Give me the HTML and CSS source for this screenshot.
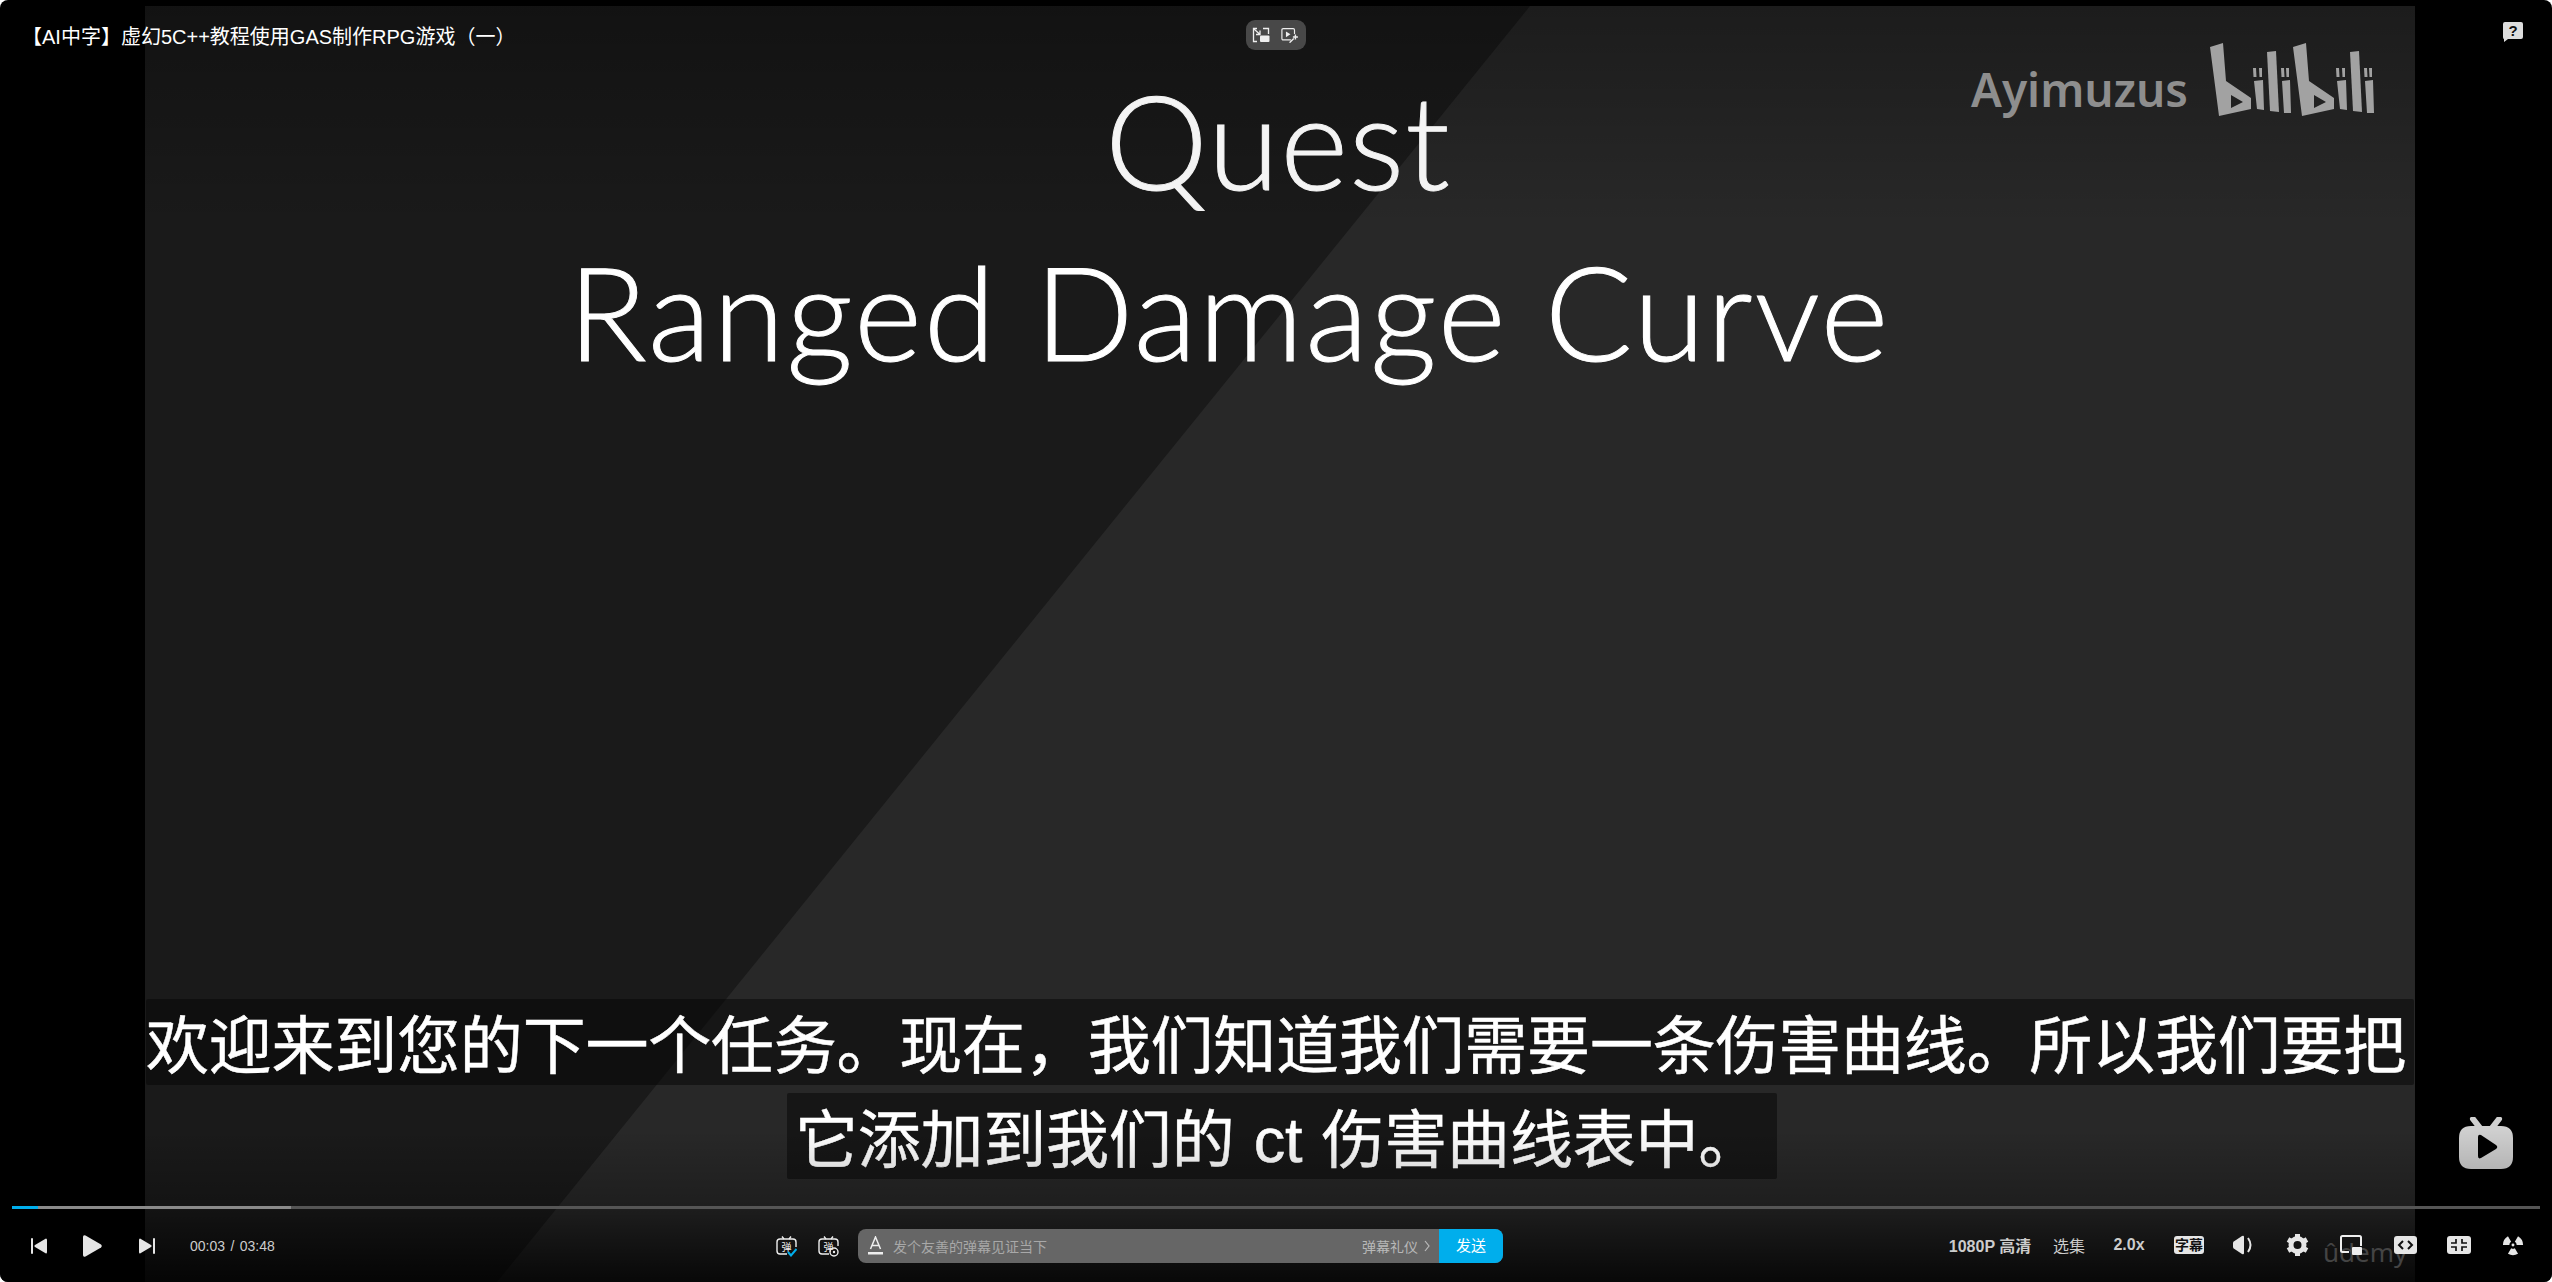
FILE: index.html
```html
<!DOCTYPE html>
<html>
  <head>
    <meta charset="UTF-8">
    <title>【AI中字】虚幻5C++教程使用GAS制作RPG游戏（一）</title>
    <link rel="stylesheet" href="styles.css">
  </head>
  <body>
    <div class="player">
      <div class="video">
        <div class="slide">
          <div class="slide-quest">Quest</div>
          <div class="slide-name">Ranged Damage Curve</div>
        </div>
      </div>

      <div class="topbar">
        <div class="video-title">【AI中字】虚幻5C++教程使用GAS制作RPG游戏（一）</div>
        <div class="mini-btns">
          <svg class="mini-icon" viewBox="0 0 18 16" fill="none" stroke="#eee" stroke-width="1.3">
            <path d="M5 1.5 H1.5 V14.5 H5 M11 1.5 H16.5 V7"/>
            <path d="M2 2 L8 7.5 M8 3.5 V7.5 H4"/>
            <rect x="8" y="8.5" width="9.5" height="6.5" rx="1" fill="#eee" stroke="none"/>
          </svg>
          <svg class="mini-icon" viewBox="0 0 20 16" fill="none" stroke="#eee" stroke-width="1.3">
            <path d="M11 13.5 H2.5 Q1 13.5 1 12 V2.5 Q1 1 2.5 1 H13.5 Q15 1 15 2.5 V7"/>
            <path d="M5.5 4 L10.5 7.2 L5.5 10.5 Z" fill="#eee" stroke="none"/>
            <path d="M16 7.5 V13 M13.2 10.2 H18.8 M14.2 12 L9.5 16.5" stroke-width="1.6"/>
          </svg>
        </div>
        <svg class="help-icon" viewBox="0 0 20 20">
          <path d="M2 0 H18 Q20 0 20 2 V15 Q20 17 18 17 H5 L1 20 V17 Q0 17 0 15 V2 Q0 0 2 0 Z" fill="#ddd"/>
          <text x="10" y="14" text-anchor="middle" class="help-mark">?</text>
        </svg>
      </div>

      <div class="watermark">
        <span class="watermark-name">Ayimuzus</span>
        <svg class="bili-logo" viewBox="0 0 165 73" fill="#a2a2a2">
          <g>
            <path fill-rule="evenodd" d="M0 4 L13 0 L16 38 L41 55 L41 66 L9 73 Z M21 52 L21 65 L33 59 Z"/>
            <path d="M43 25 H46 L46.500 34 H43.500 Z M49 25 H52 L52 34 H49.500 Z M44 38 L53 37 L54 67 L47 66 Z"/>
            <path d="M57 9 L66 8 L69 69 L60 68 Z"/>
            <path d="M71 25 H74 L74.500 34 H71.500 Z M76 25 H79 L79 34 H76.500 Z M72 38 L80 37 L81 70 L74 70 Z"/>
          </g>
          <g transform="translate(83 0)">
            <path fill-rule="evenodd" d="M0 4 L13 0 L16 38 L41 55 L41 66 L9 73 Z M21 52 L21 65 L33 59 Z"/>
            <path d="M43 25 H46 L46.500 34 H43.500 Z M49 25 H52 L52 34 H49.500 Z M44 38 L53 37 L54 67 L47 66 Z"/>
            <path d="M57 9 L66 8 L69 69 L60 68 Z"/>
            <path d="M71 25 H74 L74.500 34 H71.500 Z M76 25 H79 L79 34 H76.500 Z M72 38 L80 37 L81 70 L74 70 Z"/>
          </g>
        </svg>
      </div>

      <div class="subtitles">
        <span class="sub-line sub-line-long">欢迎来到您的下一个任务。现在，我们知道我们需要一条伤害曲线。所以我们要把</span>
        <span class="sub-line sub-line-short">它添加到我们的 ct 伤害曲线表中。</span>
      </div>

      <svg class="tv-icon" viewBox="0 0 54 52" fill="#cfcfcf">
        <path d="M14 2 L21 11 M40 2 L33 11" stroke="#cfcfcf" stroke-width="6" stroke-linecap="round"/>
        <path fill-rule="evenodd" d="M12 9 H42 Q54 9 54 21 V40 Q54 52 42 52 H12 Q0 52 0 40 V21 Q0 9 12 9 Z M19 20 Q19 17 22 18 L37 28 Q39.500 30 37 32 L22 41 Q19 42.500 19 39 Z"/>
      </svg>

      <div class="controls">
        <div class="progress">
          <div class="progress-played"></div>
          <div class="progress-buffered"></div>
        </div>
        <div class="control-row">
          <div class="control-left">
            <svg class="ctl-prev" viewBox="0 0 16 16" fill="#e6e6e6">
              <rect x="0" y="0" width="2" height="16" rx="1"/>
              <path d="M15 .5 Q16 .5 16 2 V14 Q16 15.500 15 15.500 L4 9 Q2.500 8 4 7 Z"/>
            </svg>
            <svg class="ctl-play" viewBox="0 0 19 22" fill="#e6e6e6">
              <path d="M0 2 Q0 -.5 2.500 .5 L18 9.500 Q19.500 11 18 12.500 L2.500 21.500 Q0 22.500 0 20 Z"/>
            </svg>
            <svg class="ctl-next" viewBox="0 0 16 16" fill="#e6e6e6">
              <rect x="14" y="0" width="2" height="16" rx="1"/>
              <path d="M1 .5 Q0 .5 0 2 V14 Q0 15.500 1 15.500 L12 9 Q13.500 8 12 7 Z"/>
            </svg>
            <span class="time">00:03 / 03:48</span>
          </div>

          <div class="control-mid">
            <svg class="dm-icon" viewBox="0 0 21 21" fill="none" stroke="#eee" stroke-width="1.400">
              <path d="M6 .5 L8 3 M15 .5 L13 3"/>
              <path d="M11 18 H4 Q1 18 1 15 V6 Q1 3 4 3 H17 Q20 3 20 6 V11"/>
              <text x="10.500" y="14.500" text-anchor="middle" class="dm-char">弹</text>
              <path d="M12 16 L15 19.500 L20.500 13" stroke="#00aeec" stroke-width="2"/>
            </svg>
            <svg class="dm-icon" viewBox="0 0 21 21" fill="none" stroke="#eee" stroke-width="1.400">
              <path d="M6 .5 L8 3 M15 .5 L13 3"/>
              <path d="M11 18 H4 Q1 18 1 15 V6 Q1 3 4 3 H17 Q20 3 20 6 V10"/>
              <text x="10.500" y="14.500" text-anchor="middle" class="dm-char">弹</text>
              <circle cx="16" cy="16" r="4"/>
              <circle cx="16" cy="16" r="1.200" fill="#eee" stroke="none"/>
            </svg>
            <div class="dm-input">
              <svg class="dm-a" viewBox="0 0 15 20" fill="none" stroke="#eee" stroke-width="1.500">
                <path d="M2.500 13 L7.500 1 L12.500 13 M4 9.500 H11"/>
                <rect x="0" y="16" width="15" height="2.500" fill="#eee" stroke="none"/>
              </svg>
              <span class="dm-placeholder">发个友善的弹幕见证当下</span>
              <span class="dm-rules">弹幕礼仪</span>
              <svg class="dm-chevron" viewBox="0 0 6 12" fill="none" stroke="#bbb" stroke-width="1.200"><path d="M1 1 L5 6 L1 11"/></svg>
              <span class="dm-send">发送</span>
            </div>
          </div>

          <div class="control-right">
            <span class="ctl-text ctl-quality">1080P 高清</span>
            <span class="ctl-text ctl-normal">选集</span>
            <span class="ctl-text ctl-speed">2.0x</span>
            <span class="ctl-slot"><span class="cc-badge">字幕</span></span>
            <span class="ctl-slot">
              <svg width="21" height="20" viewBox="0 0 21 20" fill="none">
                <path d="M0 8 Q0 6.500 1.500 6 L9 1 Q11 0 11 2 V18 Q11 20 9 19 L1.500 14 Q0 13.500 0 12 Z" fill="#e6e6e6"/>
                <path d="M15 3 Q20 10 15 17" stroke="#e6e6e6" stroke-width="2"/>
              </svg>
            </span>
            <span class="ctl-slot">
              <svg width="25" height="22" viewBox="0 0 25 22" fill="none" stroke="#e6e6e6">
                <circle cx="12.500" cy="11" r="6.500" stroke-width="5"/>
                <path d="M12.500 0 V4 M12.500 18 V22 M3 5.500 L6.500 7.500 M18.500 14.500 L22 16.500 M3 16.500 L6.500 14.500 M18.500 7.500 L22 5.500" stroke-width="5"/>
              </svg>
            </span>
            <span class="ctl-slot udemy-slot">
              <svg width="22" height="20" viewBox="0 0 22 20" fill="none">
                <path d="M9 17 H2.500 Q1 17 1 15.500 V2.500 Q1 1 2.500 1 H19.500 Q21 1 21 2.500 V11" stroke="#eee" stroke-width="2"/>
                <rect x="12" y="12" width="10" height="8" rx="1" fill="#eee"/>
              </svg>
              <span class="udemy-mark">ûdemy</span>
            </span>
            <span class="ctl-slot">
              <svg width="23" height="18" viewBox="0 0 23 18">
                <rect width="23" height="18" rx="3" fill="#e6e6e6"/>
                <path d="M9 5 L5 9 L9 13 M14 5 L18 9 L14 13" fill="none" stroke="#111" stroke-width="2"/>
              </svg>
            </span>
            <span class="ctl-slot">
              <svg width="24" height="18" viewBox="0 0 24 18">
                <rect width="24" height="18" rx="3" fill="#e6e6e6"/>
                <path d="M9 3 V7 H4 M15 3 V7 H20 M9 15 V11 H4 M15 15 V11 H20" fill="none" stroke="#111" stroke-width="1.700"/>
              </svg>
            </span>
            <span class="ctl-slot">
              <svg width="24" height="22" viewBox="0 0 24 24" fill="#e6e6e6">
                <path d="M14 15.460 L17.500 21.530 A11 11 0 0 1 6.500 21.530 L10 15.460 A4 4 0 0 0 14 15.460 Z"/>
                <path d="M8 12 L1 12 A11 11 0 0 1 6.500 2.470 L10 8.540 A4 4 0 0 0 8 12 Z"/>
                <path d="M14 8.540 L17.500 2.470 A11 11 0 0 1 23 12 L16 12 A4 4 0 0 0 14 8.540 Z"/>
                <circle cx="12" cy="12" r="1.600"/>
              </svg>
            </span>
          </div>
        </div>
      </div>
    </div>
  </body>
</html>
```

FILE: styles.css
```css
html, body {
  margin: 0;
  height: 100%;
  background: #fff;
}
body {
  font-family: "Liberation Sans", "Noto Sans CJK SC", sans-serif;
  overflow: hidden;
}
.player {
  position: relative;
  height: 1282px;
  background: #000;
  border-radius: 8px;
  overflow: hidden;
  color: #fff;
}

/* the video frame with its two-tone slide */
.video {
  position: relative;
  box-sizing: border-box;
  height: 1276px;
  margin: 0 137px 0 145px;
  top: 6px;
  background: #282828;
}
.video::before {
  content: "";
  position: absolute;
  inset: 0;
  background: #1a1a1a;
  clip-path: polygon(0 0, 1385px 0, 352px 100%, 0 100%);
}
.video::after {
  content: "";
  position: absolute;
  inset: 0;
  background: linear-gradient(to bottom, rgba(0,0,0,.3), rgba(0,0,0,0) 220px);
}
.slide {
  position: relative;
  z-index: 1;
  font-family: Lato, sans-serif;
  font-weight: 300;
  color: #f4f4f4;
  -webkit-text-stroke: 1px currentColor;
}
.slide-quest {
  font-size: 130px;
  line-height: 160px;
  padding: 54px 0 0 960px;
  letter-spacing: 1px;
}
.slide-name {
  font-size: 130px;
  line-height: 160px;
  padding: 11px 0 0 423px;
  letter-spacing: 2px;
  color: #fff;
  white-space: nowrap;
}

/* top overlays */
.topbar {
  position: absolute;
  top: 20px;
  left: 0;
  right: 0;
}
.video-title {
  position: absolute;
  left: 22px;
  top: 3px;
  font-size: 20px;
  line-height: 28px;
  white-space: nowrap;
}
.mini-btns {
  position: absolute;
  left: 1246px;
  top: 0;
  width: 60px;
  height: 30px;
  box-sizing: border-box;
  padding: 0 6px;
  display: flex;
  align-items: center;
  gap: 11px;
  background: #484848;
  border-radius: 9px;
}
.mini-icon {
  width: 18px;
  height: 16px;
}
.help-icon {
  position: absolute;
  left: 2503px;
  top: 2px;
  width: 20px;
  height: 20px;
}
.help-mark {
  font-size: 15px;
  font-weight: 700;
  fill: #111;
}
.watermark {
  position: absolute;
  left: 1971px;
  top: 43px;
  display: flex;
  align-items: flex-start;
  gap: 22px;
}
.watermark-name {
  font-family: "Noto Sans", sans-serif;
  font-size: 46px;
  font-weight: 600;
  line-height: 64px;
  margin-top: 14px;
  color: #8e8e8e;
}
.bili-logo {
  width: 165px;
  height: 73px;
}

/* subtitles */
.subtitles {
  position: absolute;
  left: 145px;
  right: 137px;
  bottom: 103px;
  display: flex;
  flex-direction: column;
  align-items: center;
  gap: 8px;
}
.sub-line {
  font-size: 63px;
  line-height: 94px;
  height: 86px;
  letter-spacing: -.22px;
  color: #fff;
  white-space: pre;
  background: rgba(8,8,8,.55);
  border-radius: 2px;
  -webkit-text-stroke: .5px #fff;
}
.sub-line-long {
  padding-right: 8px;
}
.sub-line-short {
  padding: 0 16px 0 8px;
  margin-left: 4px;
  word-spacing: 2px;
}
.tv-icon {
  position: absolute;
  left: 2459px;
  top: 1117px;
  width: 54px;
  height: 52px;
}

/* bottom controls */
.controls {
  position: absolute;
  left: 0;
  right: 0;
  bottom: 0;
  height: 152px;
  box-sizing: border-box;
  padding-top: 76px;
  background: linear-gradient(to bottom, rgba(0,0,0,0), rgba(0,0,0,.25) 50%, rgba(0,0,0,.8));
}
.progress {
  display: flex;
  height: 3px;
  margin: 0 12px;
  background: #555;
}
.progress-played {
  width: 26px;
  background: #00aeec;
}
.progress-buffered {
  width: 253px;
  background: #8a8a8a;
}
.control-row {
  display: grid;
  grid-template-columns: 745px 727px 1fr;
  align-items: center;
  height: 34px;
  margin-top: 20px;
  padding: 0 12px 0 31px;
}
.control-left {
  display: flex;
  align-items: center;
}
.ctl-prev, .ctl-next {
  width: 16px;
  height: 16px;
}
.ctl-play {
  width: 19px;
  height: 22px;
  margin: 0 37px 0 36px;
}
.time {
  margin-left: 35px;
  font-size: 14px;
  word-spacing: 1.5px;
  color: #ccc;
}
.control-mid {
  display: flex;
  align-items: center;
}
.dm-icon {
  width: 21px;
  height: 21px;
  margin-right: 21px;
}
.dm-icon + .dm-icon {
  margin-right: 19px;
}
.dm-char {
  font-size: 10px;
  fill: #eee;
  stroke: none;
}
.dm-input {
  flex: 1;
  display: flex;
  align-items: center;
  height: 34px;
  padding-left: 10px;
  background: #666;
  border-radius: 8px;
  overflow: hidden;
  font-size: 14px;
}
.dm-a {
  width: 15px;
  height: 20px;
  margin-right: 10px;
}
.dm-placeholder {
  color: #a8a8a8;
  flex: 1;
}
.dm-rules {
  color: #b8b8b8;
}
.dm-chevron {
  width: 6px;
  height: 12px;
  margin: 0 9px 0 6px;
}
.dm-send {
  width: 64px;
  line-height: 34px;
  text-align: center;
  background: #00aeec;
  color: #fff;
  font-size: 15px;
}
.control-right {
  display: flex;
  align-items: center;
  justify-content: flex-end;
  margin-top: -3px;
}
.ctl-text {
  font-size: 16px;
  color: #ccc;
  text-align: center;
  white-space: nowrap;
}
.ctl-quality {
  width: 104px;
  font-weight: 700;
}
.ctl-normal {
  width: 54px;
}
.ctl-speed {
  width: 66px;
  font-weight: 700;
}
.ctl-slot {
  position: relative;
  width: 54px;
  display: flex;
  justify-content: center;
}
.cc-badge {
  width: 30px;
  height: 18px;
  line-height: 18px;
  text-align: center;
  font-size: 14px;
  font-weight: 700;
  color: #111;
  background: #e6e6e6;
  border-radius: 3px;
  white-space: nowrap;
}
.udemy-mark {
  position: absolute;
  left: -1px;
  top: 0;
  font-family: "Noto Sans", sans-serif;
  font-size: 26px;
  line-height: 34px;
  color: #444;
}
.udemy-slot svg {
  position: relative;
  z-index: 1;
}
```
